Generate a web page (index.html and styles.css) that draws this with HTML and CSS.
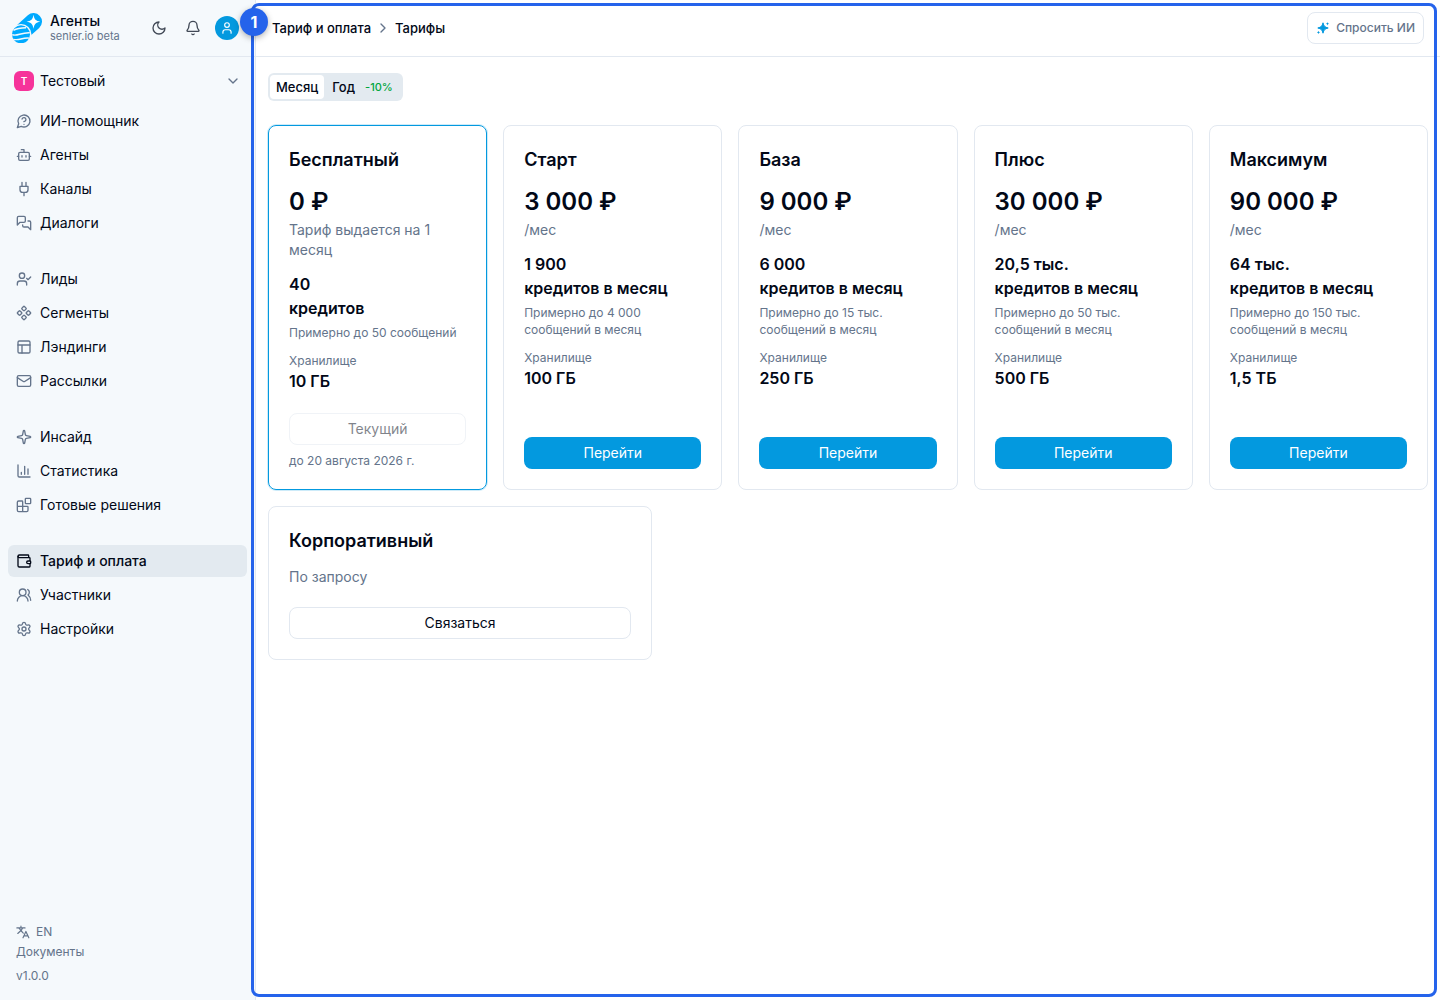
FILE: index.html
```html
<!DOCTYPE html>
<html lang="ru">
  <head>
    <meta charset="UTF-8" />
    <meta name="viewport" content="width=device-width, initial-scale=1.0" />
    <title>Тарифы</title>
    <link rel="stylesheet" href="styles.css">
  </head>
  <body>
    <aside class="sidebar">
      <header class="sidebar-header">
        <a class="brand" href="#">
          <svg class="brand-logo" viewBox="0 0 30 30" aria-hidden="true">
            <path d="M10.500 18.500 21.500 8.600" fill="none" stroke="#00aaff" stroke-width="17" stroke-linecap="round" />
            <circle cx="9" cy="21.500" r="10.500" fill="#f5f9fc" />
            <path d="M21.500 1.800c.8 4.700 2.200 6.100 6.800 6.900-4.600.9-6 2.300-6.800 7-.8-4.700-2.200-6.100-6.900-7 4.700-.8 6.100-2.200 6.900-6.900Z" fill="#fff" />
            <circle cx="9" cy="21.300" r="9" fill="#00aaff" />
            <path d="M1.500 17.300c3.500-1.900 7.500-2.300 12.500-2.500M.2 21.600c4.800 2.300 8.300-2.300 17.500-1.900M1.500 26.300c5.500 1.700 8.500-2 15.800-1.200" fill="none" stroke="#f5f9fc" stroke-width="1.400" />
          </svg>
          <span class="brand-text">
            <span class="brand-name">Агенты</span>
            <span class="brand-host">senler.io beta</span>
          </span>
        </a>
        <div class="header-actions">
          <button class="icon-button" type="button" aria-label="Тема">
            <svg class="icon" viewBox="0 0 24 24"><path d="M12 3a6 6 0 0 0 9 9 9 9 0 1 1-9-9Z" /></svg>
          </button>
          <button class="icon-button" type="button" aria-label="Уведомления">
            <svg class="icon" viewBox="0 0 24 24"><path d="M10.268 21a2 2 0 0 0 3.464 0" /><path d="M3.262 15.326A1 1 0 0 0 4 17h16a1 1 0 0 0 .74-1.673C19.410 13.956 18 12.499 18 8A6 6 0 0 0 6 8c0 4.499-1.411 5.956-2.738 7.326" /></svg>
          </button>
          <button class="avatar" type="button" aria-label="Профиль">
            <svg class="icon" viewBox="0 0 24 24"><circle cx="12" cy="7" r="4" /><path d="M19 21v-2a4 4 0 0 0-4-4H9a4 4 0 0 0-4 4v2" /></svg>
          </button>
        </div>
      </header>

      <button class="workspace" type="button">
        <span class="workspace-badge">T</span>
        <span class="workspace-name">Тестовый</span>
        <svg class="icon" viewBox="0 0 24 24"><path d="m6 9 6 6 6-6" /></svg>
      </button>

      <nav class="nav">
        <div class="nav-group">
          <a class="nav-item" href="#">
            <svg class="icon" viewBox="0 0 24 24"><path d="M7.900 20A9 9 0 1 0 4 16.100L2 22Z" /><path d="M9.090 9a3 3 0 0 1 5.830 1c0 2-3 3-3 3" /><path d="M12 17h.01" /></svg>
            ИИ-помощник
          </a>
          <a class="nav-item" href="#">
            <svg class="icon" viewBox="0 0 24 24"><path d="M12 8V4H8" /><rect width="16" height="12" x="4" y="8" rx="2" /><path d="M2 14h2M20 14h2M15 13v2M9 13v2" /></svg>
            Агенты
          </a>
          <a class="nav-item" href="#">
            <svg class="icon" viewBox="0 0 24 24"><path d="M12 22v-5M9 8V2M15 8V2M18 8v5a4 4 0 0 1-4 4h-4a4 4 0 0 1-4-4V8Z" /></svg>
            Каналы
          </a>
          <a class="nav-item" href="#">
            <svg class="icon" viewBox="0 0 24 24"><path d="M14 9a2 2 0 0 1-2 2H6l-4 4V4a2 2 0 0 1 2-2h8a2 2 0 0 1 2 2Z" /><path d="M18 9h2a2 2 0 0 1 2 2v11l-4-4h-6a2 2 0 0 1-2-2v-1" /></svg>
            Диалоги
          </a>
        </div>

        <div class="nav-group">
          <a class="nav-item" href="#">
            <svg class="icon" viewBox="0 0 24 24"><path d="m16 11 2 2 4-4" /><path d="M16 21v-2a4 4 0 0 0-4-4H6a4 4 0 0 0-4 4v2" /><circle cx="9" cy="7" r="4" /></svg>
            Лиды
          </a>
          <a class="nav-item" href="#">
            <svg class="icon" viewBox="0 0 24 24"><path d="M15.536 11.293a1 1 0 0 0 0 1.414l2.376 2.377a1 1 0 0 0 1.414 0l2.377-2.377a1 1 0 0 0 0-1.414l-2.377-2.377a1 1 0 0 0-1.414 0z" /><path d="M2.297 11.293a1 1 0 0 0 0 1.414l2.377 2.377a1 1 0 0 0 1.414 0l2.377-2.377a1 1 0 0 0 0-1.414L6.088 8.916a1 1 0 0 0-1.414 0z" /><path d="M8.916 17.912a1 1 0 0 0 0 1.415l2.377 2.376a1 1 0 0 0 1.414 0l2.377-2.376a1 1 0 0 0 0-1.415l-2.377-2.376a1 1 0 0 0-1.414 0z" /><path d="M8.916 4.674a1 1 0 0 0 0 1.414l2.377 2.376a1 1 0 0 0 1.414 0l2.377-2.376a1 1 0 0 0 0-1.414l-2.377-2.377a1 1 0 0 0-1.414 0z" /></svg>
            Сегменты
          </a>
          <a class="nav-item" href="#">
            <svg class="icon" viewBox="0 0 24 24"><rect width="18" height="18" x="3" y="3" rx="2" /><path d="M3 9h18M9 21V9" /></svg>
            Лэндинги
          </a>
          <a class="nav-item" href="#">
            <svg class="icon" viewBox="0 0 24 24"><path d="m22 7-8.991 5.727a2 2 0 0 1-2.009 0L2 7" /><rect x="2" y="4" width="20" height="16" rx="2" /></svg>
            Рассылки
          </a>
        </div>

        <div class="nav-group">
          <a class="nav-item" href="#">
            <svg class="icon" viewBox="0 0 24 24"><path d="M11.017 2.814a1 1 0 0 1 1.966 0l1.051 5.558a2 2 0 0 0 1.594 1.594l5.558 1.051a1 1 0 0 1 0 1.966l-5.558 1.051a2 2 0 0 0-1.594 1.594l-1.051 5.558a1 1 0 0 1-1.966 0l-1.051-5.558a2 2 0 0 0-1.594-1.594l-5.558-1.051a1 1 0 0 1 0-1.966l5.558-1.051a2 2 0 0 0 1.594-1.594z" /></svg>
            Инсайд
          </a>
          <a class="nav-item" href="#">
            <svg class="icon" viewBox="0 0 24 24"><path d="M3 3v16a2 2 0 0 0 2 2h16M18 17V9M13 17V5M8 17v-3" /></svg>
            Статистика
          </a>
          <a class="nav-item" href="#">
            <svg class="icon" viewBox="0 0 24 24"><rect width="8" height="8" x="14" y="2" rx="1" /><path d="M10 22V7a1 1 0 0 0-1-1H4a2 2 0 0 0-2 2v12a2 2 0 0 0 2 2h12a2 2 0 0 0 2-2v-5a1 1 0 0 0-1-1H2" /></svg>
            Готовые решения
          </a>
        </div>

        <div class="nav-group">
          <a class="nav-item active" href="#" aria-current="page">
            <svg class="icon" viewBox="0 0 24 24"><path d="M19 7V4a1 1 0 0 0-1-1H5a2 2 0 0 0 0 4h15a1 1 0 0 1 1 1v4h-3a2 2 0 0 0 0 4h3a1 1 0 0 0 1-1v-2a1 1 0 0 0-1-1" /><path d="M3 5v14a2 2 0 0 0 2 2h15a1 1 0 0 0 1-1v-4" /></svg>
            Тариф и оплата
          </a>
          <a class="nav-item" href="#">
            <svg class="icon" viewBox="0 0 24 24"><path d="M18 21a8 8 0 0 0-16 0" /><circle cx="10" cy="8" r="5" /><path d="M22 20c0-3.370-2-6.500-4-8a5 5 0 0 0-.450-8.300" /></svg>
            Участники
          </a>
          <a class="nav-item" href="#">
            <svg class="icon" viewBox="0 0 24 24"><path d="M9.671 4.136a2.340 2.340 0 0 1 4.659 0 2.340 2.340 0 0 0 3.319 1.915 2.340 2.340 0 0 1 2.330 4.033 2.340 2.340 0 0 0 0 3.831 2.340 2.340 0 0 1-2.330 4.033 2.340 2.340 0 0 0-3.319 1.915 2.340 2.340 0 0 1-4.659 0 2.340 2.340 0 0 0-3.320-1.915 2.340 2.340 0 0 1-2.330-4.033 2.340 2.340 0 0 0 0-3.831A2.340 2.340 0 0 1 6.350 6.051a2.340 2.340 0 0 0 3.319-1.915" /><circle cx="12" cy="12" r="3" /></svg>
            Настройки
          </a>
        </div>
      </nav>

      <footer class="sidebar-footer">
        <button class="language" type="button">
          <svg class="icon" viewBox="0 0 24 24"><path d="m12.500 14-3.500-3.500M3 14.500l6-5.500 2.500-4M1.500 5h14M8.500 2v3M5 5.500l5.500 6M12 22l5-11 5 11M14 18.500h6" /></svg>
          EN
        </button>
        <a class="footer-link" href="#">Документы</a>
        <span class="version">v1.0.0</span>
      </footer>
    </aside>

    <main class="page">
      <header class="topbar">
        <nav class="breadcrumbs">
          <a href="#">Тариф и оплата</a>
          <svg class="icon" viewBox="0 0 24 24"><path d="m9 18 6-6-6-6" /></svg>
          <span>Тарифы</span>
        </nav>
        <button class="ask-button" type="button">
          <svg class="ask-icon" viewBox="0 0 14 14" aria-hidden="true"><path d="M7 1.800c.9 3.500 1.700 4.300 5.200 5.200-3.500.9-4.300 1.700-5.200 5.200-.9-3.500-1.700-4.300-5.200-5.200 3.500-.9 4.300-1.700 5.200-5.200Z" stroke="#0399df" stroke-linejoin="round" /><path d="M11.500 1c.3 1.200.6 1.400 1.700 1.700-1.100.3-1.400.6-1.700 1.700-.3-1.100-.6-1.400-1.700-1.700 1.100-.3 1.400-.5 1.700-1.700ZM2.500 9.800c.3 1.100.6 1.300 1.600 1.600-1 .3-1.300.6-1.600 1.600-.3-1-.6-1.300-1.600-1.600 1-.3 1.300-.5 1.600-1.600Z" /></svg>
          Спросить ИИ
        </button>
      </header>

      <div class="content">
        <div class="period">
          <button class="period-option selected" type="button" aria-pressed="true">Месяц</button>
          <button class="period-option" type="button" aria-pressed="false">Год <span class="discount">-10%</span></button>
        </div>

        <section class="plans">
          <article class="plan current">
            <h2 class="plan-name">Бесплатный</h2>
            <p class="plan-price">0 ₽</p>
            <p class="plan-term">Тариф выдается на 1 месяц</p>
            <p class="plan-credits">40<br>кредитов</p>
            <p class="plan-note">Примерно до 50 сообщений</p>
            <p class="plan-label">Хранилище</p>
            <p class="plan-storage">10 ГБ</p>
            <div class="plan-action">
              <button class="button outline" type="button" disabled>Текущий</button>
              <p class="plan-until">до 20 августа 2026 г.</p>
            </div>
          </article>
          <article class="plan">
            <h2 class="plan-name">Старт</h2>
            <p class="plan-price">3 000 ₽</p>
            <p class="plan-term">/мес</p>
            <p class="plan-credits">1 900<br>кредитов в месяц</p>
            <p class="plan-note">Примерно до 4 000 сообщений в месяц</p>
            <p class="plan-label">Хранилище</p>
            <p class="plan-storage">100 ГБ</p>
            <div class="plan-action">
              <button class="button primary" type="button">Перейти</button>
            </div>
          </article>
          <article class="plan">
            <h2 class="plan-name">База</h2>
            <p class="plan-price">9 000 ₽</p>
            <p class="plan-term">/мес</p>
            <p class="plan-credits">6 000<br>кредитов в месяц</p>
            <p class="plan-note">Примерно до 15 тыс. сообщений в месяц</p>
            <p class="plan-label">Хранилище</p>
            <p class="plan-storage">250 ГБ</p>
            <div class="plan-action">
              <button class="button primary" type="button">Перейти</button>
            </div>
          </article>
          <article class="plan">
            <h2 class="plan-name">Плюс</h2>
            <p class="plan-price">30 000 ₽</p>
            <p class="plan-term">/мес</p>
            <p class="plan-credits">20,5 тыс.<br>кредитов в месяц</p>
            <p class="plan-note">Примерно до 50 тыс. сообщений в месяц</p>
            <p class="plan-label">Хранилище</p>
            <p class="plan-storage">500 ГБ</p>
            <div class="plan-action">
              <button class="button primary" type="button">Перейти</button>
            </div>
          </article>
          <article class="plan">
            <h2 class="plan-name">Максимум</h2>
            <p class="plan-price">90 000 ₽</p>
            <p class="plan-term">/мес</p>
            <p class="plan-credits">64 тыс.<br>кредитов в месяц</p>
            <p class="plan-note">Примерно до 150 тыс. сообщений в месяц</p>
            <p class="plan-label">Хранилище</p>
            <p class="plan-storage">1,5 ТБ</p>
            <div class="plan-action">
              <button class="button primary" type="button">Перейти</button>
            </div>
          </article>
        </section>

        <article class="plan corporate">
          <h2 class="plan-name">Корпоративный</h2>
          <p class="plan-request">По запросу</p>
          <div class="plan-action">
            <button class="button outline" type="button">Связаться</button>
          </div>
        </article>
      </div>

      <div class="highlight"><span class="highlight-number">1</span></div>
    </main>
  </body>
</html>
```
FILE: styles.css
```css
* {
  box-sizing: border-box;
}

body {
  margin: 0;
  min-height: 100vh;
  display: grid;
  grid-template-columns: 256px minmax(0, 1fr);
  background: #fff;
  color: #020817;
  font-family: Inter, sans-serif;
  font-size: 14px;
  line-height: 20px;
}

h2,
p {
  margin: 0;
}

a {
  color: inherit;
  text-decoration: none;
}

button {
  margin: 0;
  padding: 0;
  border: 0;
  background: none;
  color: inherit;
  font: inherit;
  cursor: pointer;
}

.icon {
  width: 16px;
  height: 16px;
  flex-shrink: 0;
  fill: none;
  stroke: currentColor;
  stroke-width: 2;
  stroke-linecap: round;
  stroke-linejoin: round;
}

/* Sidebar */
.sidebar {
  display: flex;
  flex-direction: column;
  background: #f5f9fc;
  border-right: 1px solid #e2e8f0;
}

.sidebar-header {
  display: flex;
  align-items: center;
  justify-content: space-between;
  height: 57px;
  padding: 0 16px 0 12px;
  border-bottom: 1px solid #e2e8f0;
}

.brand {
  display: flex;
  align-items: center;
  gap: 8px;
}

.brand-logo {
  width: 30px;
  height: 30px;
}

.brand-text {
  display: flex;
  flex-direction: column;
}

.brand-name {
  font-weight: 500;
  line-height: 16px;
}

.brand-host {
  color: #64748b;
  font-size: 11px;
  line-height: 14px;
}

.header-actions {
  display: flex;
  align-items: center;
  gap: 2px;
}

.icon-button {
  display: grid;
  place-items: center;
  width: 32px;
  height: 32px;
  color: #414956;
}

.avatar {
  display: grid;
  place-items: center;
  width: 24px;
  height: 24px;
  margin-left: 4px;
  border-radius: 50%;
  background: #0399df;
  color: #fff;
}

.avatar .icon {
  width: 14px;
  height: 14px;
}

.workspace {
  display: flex;
  align-items: center;
  gap: 6px;
  height: 32px;
  margin: 8px 8px 0;
  padding: 0 6px;
  text-align: left;
}

.workspace-badge {
  width: 20px;
  height: 20px;
  border-radius: 6px;
  background: #f6339a;
  color: #fff;
  font-size: 10px;
  font-weight: 600;
  text-align: center;
}

.workspace-name {
  flex: 1;
}

.workspace .icon {
  color: #64748b;
}

.nav {
  display: flex;
  flex-direction: column;
  flex: 1;
  gap: 24px;
  padding: 8px;
}

.nav-group {
  display: flex;
  flex-direction: column;
  gap: 2px;
}

.nav-item {
  display: flex;
  align-items: center;
  gap: 8px;
  height: 32px;
  padding: 0 8px;
  border-radius: 6px;
}

.nav-item .icon {
  color: #64748b;
}

.nav-item.active {
  background: #e3eaf0;
  font-weight: 500;
}

.nav-item.active .icon {
  color: #020817;
}

.sidebar-footer {
  display: flex;
  flex-direction: column;
  align-items: flex-start;
  padding: 0 16px 16px;
  color: #64748b;
  font-size: 12px;
}

.language {
  display: flex;
  align-items: center;
  gap: 6px;
}

.language .icon {
  width: 14px;
  height: 14px;
}

.version {
  margin-top: 6px;
  line-height: 16px;
}

/* Page */
.page {
  position: relative;
}

.topbar {
  display: flex;
  align-items: center;
  justify-content: space-between;
  height: 57px;
  padding: 0 16px;
  border-bottom: 1px solid #e2e8f0;
}

.breadcrumbs {
  display: flex;
  align-items: center;
  gap: 4px;
  font-size: 13px;
  font-weight: 500;
}

.breadcrumbs .icon {
  color: #64748b;
}

.ask-button {
  display: flex;
  align-items: center;
  gap: 6px;
  height: 32px;
  padding: 0 8px;
  border: 1px solid #e2e8f0;
  border-radius: 8px;
  color: #64748b;
  font-size: 12px;
  font-weight: 500;
}

.ask-icon {
  width: 14px;
  height: 14px;
  fill: #0399df;
}

.content {
  padding: 16px 12px;
}

.period {
  display: inline-flex;
  padding: 2px;
  border-radius: 6px;
  background: #e3eaf0;
  vertical-align: top;
}

.period-option {
  display: flex;
  align-items: center;
  gap: 10px;
  height: 24px;
  padding: 0 6px;
  border-radius: 4px;
  font-size: 13px;
  font-weight: 500;
}

.period-option + .period-option {
  padding: 0 8px;
}

.period-option.selected {
  background: #fff;
}

.discount {
  color: #00a63e;
  font-size: 11px;
}

.plans {
  display: grid;
  grid-template-columns: repeat(5, minmax(0, 1fr));
  gap: 16px;
  margin: 24px 0 16px;
}

.plan {
  display: flex;
  flex-direction: column;
  padding: 20px;
  border: 1px solid #e2e8f0;
  border-radius: 8px;
}

.plan.current {
  border-color: #0399df;
  box-shadow: 0 0 0 1px rgba(3, 153, 223, 0.2);
}

.plan.corporate {
  max-width: 384px;
}

.plan-name {
  font-size: 18px;
  font-weight: 600;
  line-height: 28px;
}

.plan-price {
  margin-top: 12px;
  font-size: 24px;
  font-weight: 600;
  line-height: 32px;
}

.plan-term {
  margin-top: 2px;
  color: #64748b;
}

.plan-credits {
  margin-top: 12px;
  font-size: 16px;
  font-weight: 600;
  line-height: 24px;
}

.plan-note {
  margin-top: 4px;
  color: #64748b;
  font-size: 12px;
  line-height: 17px;
}

.plan-label {
  margin-top: 12px;
  color: #64748b;
  font-size: 12px;
  line-height: 16px;
}

.plan-storage {
  font-size: 16px;
  font-weight: 600;
  line-height: 24px;
}

.plan-request {
  margin-top: 12px;
  color: #64748b;
}

.plan-action {
  margin-top: auto;
  padding-top: 20px;
}

.button {
  width: 100%;
  height: 32px;
  border-radius: 8px;
}

.button.primary {
  background: #0399df;
  color: #fff;
}

.button.outline {
  border: 1px solid #e2e8f0;
}

.button:disabled {
  opacity: 0.5;
  cursor: default;
}

.plan-until {
  margin-top: 8px;
  color: #64748b;
  font-size: 12px;
  line-height: 16px;
}

/* Numbered frame over the page area */
.highlight {
  position: absolute;
  inset: 3px 3px 3px -5px;
  border: 3px solid #2563eb;
  border-radius: 8px;
  pointer-events: none;
}

.highlight-number {
  position: absolute;
  top: 2px;
  left: -14px;
  width: 28px;
  height: 28px;
  border-radius: 50%;
  background: #2563eb;
  box-shadow: 0 2px 6px rgba(0, 0, 0, 0.3);
  color: #fff;
  font-size: 16px;
  font-weight: 700;
  line-height: 28px;
  text-align: center;
}
```
